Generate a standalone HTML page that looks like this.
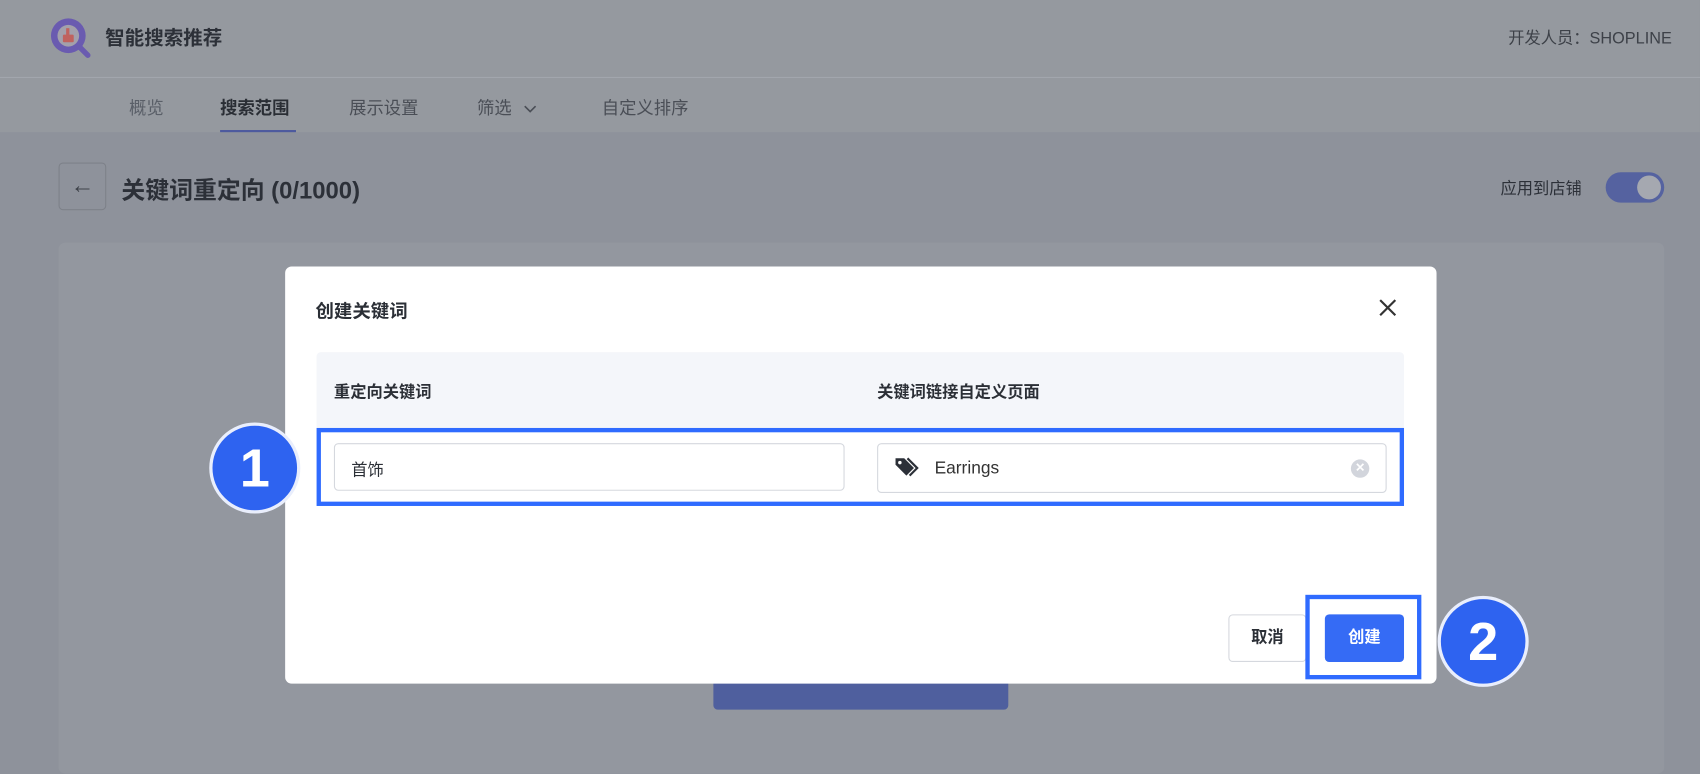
<!DOCTYPE html>
<html><head><meta charset="utf-8"><style>
*{margin:0;padding:0;box-sizing:border-box}
html,body{width:1700px;height:766px;overflow:hidden;background:#8e929b}
#w{position:absolute;left:0;top:0;width:1568px;height:707px;transform:scale(1.08418,1.08345);transform-origin:0 0;font-family:"Liberation Sans","Noto Sans CJK SC",sans-serif;color:#2b2f36}
.a{position:absolute}
</style></head><body><div id="w">
<div class="a" style="left:0;top:0;width:1568px;height:72px;background:#95999f;border-bottom:1px solid #a2a6ad"></div>
<div class="a" style="left:0;top:72px;width:1568px;height:50px;background:#95999f"></div>
<svg class="a" style="left:44px;top:14px" width="42" height="42" viewBox="0 0 42 42"><circle cx="19" cy="19" r="16" fill="#6a5bb0"/><circle cx="19" cy="19" r="10" fill="#a3a0ab"/><path d="M29 29l8 8" stroke="#6a5bb0" stroke-width="5" stroke-linecap="round"/><rect x="14" y="18" width="10" height="7" rx="1" fill="#c0625e"/><rect x="17" y="12" width="3" height="8" fill="#c0625e"/></svg>
<div class="a" style="left:97px;top:21px;font-size:18px;font-weight:bold;color:#2c3038">智能搜索推荐</div>
<div class="a" style="right:26px;top:24px;font-size:15px;color:#3d4148">开发人员：SHOPLINE</div>
<div class="a" style="left:119px;top:86px;font-size:16px;color:#5a5f68">概览</div>
<div class="a" style="left:203px;top:86px;font-size:16px;color:#2a2e35;font-weight:bold">搜索范围</div>
<div class="a" style="left:203px;top:120px;width:70px;height:2px;background:#4d5a9e"></div>
<div class="a" style="left:322px;top:86px;font-size:16px;color:#4a4e56">展示设置</div>
<div class="a" style="left:440px;top:86px;font-size:16px;color:#4a4e56">筛选 <svg width="14" height="10" viewBox="0 0 14 10" style="margin-left:6px"><path d="M2 3l5 5 5-5" stroke="#4a4e56" stroke-width="1.5" fill="none"/></svg></div>
<div class="a" style="left:555px;top:86px;font-size:16px;color:#4a4e56">自定义排序</div>
<div class="a" style="left:54px;top:150px;width:44px;height:44px;border:1px solid #7d8189;border-radius:4px;text-align:center;line-height:40px;font-size:22px;color:#3d4148">←</div>
<div class="a" style="left:112px;top:158px;font-size:22px;font-weight:bold;color:#2c3038">关键词重定向 (0/1000)</div>
<div class="a" style="left:1384px;top:163px;font-size:15px;color:#2c3038">应用到店铺</div>
<div class="a" style="left:1481px;top:159px;width:54px;height:28px;border-radius:14px;background:#5562a0"><div class="a" style="right:3px;top:3px;width:22px;height:22px;border-radius:50%;background:#a5a8b0"></div></div>
<div class="a" style="left:54px;top:224px;width:1481px;height:490px;background:#93979f;border-radius:6px"></div>
<div class="a" style="left:658px;top:615px;width:272px;height:40px;background:#4f5f9e;border-radius:4px"></div>
<div class="a" style="left:263px;top:246px;width:1062px;height:385px;background:#fff;border-radius:6px"></div>
<div class="a" style="left:291px;top:273px;font-size:17px;font-weight:bold">创建关键词</div>
<svg class="a" style="left:1270px;top:274px" width="20" height="20" viewBox="0 0 20 20"><path d="M3 3l14 14M17 3L3 17" stroke="#333" stroke-width="2"/></svg>
<div class="a" style="left:292px;top:325px;width:1003px;height:70px;background:#f4f6fa;border-radius:4px 4px 0 0"></div>
<div class="a" style="left:308px;top:351px;font-size:15px;font-weight:bold">重定向关键词</div>
<div class="a" style="left:809px;top:351px;font-size:15px;font-weight:bold">关键词链接自定义页面</div>
<div class="a" style="left:292px;top:395px;width:1003px;height:72px;border:4px solid #2f6bff"></div>
<div class="a" style="left:308px;top:409px;width:471px;height:44px;border:1px solid #d5d8de;border-radius:4px;font-size:15px;padding:13px 15px">首饰</div>
<div class="a" style="left:809px;top:409px;width:470px;height:46px;border:1px solid #d5d8de;border-radius:4px"></div>
<svg class="a" style="left:824px;top:421px" width="26" height="20" viewBox="0 0 26 20"><path d="M2 2h8l9 9-7 7-10-10z" fill="#2c3038"/><circle cx="6" cy="6" r="1.6" fill="#fff"/><path d="M13 2l9 9-7 7" stroke="#2c3038" stroke-width="2" fill="none"/></svg>
<div class="a" style="left:862px;top:424px;font-size:16px;color:#333">Earrings</div>
<div class="a" style="left:1246px;top:424px;width:17px;height:17px;border-radius:50%;background:#d2d5dc;color:#fff;font-size:11px;text-align:center;line-height:17px;font-weight:bold">✕</div>
<div class="a" style="left:1133px;top:567px;width:72px;height:44px;border:1px solid #d5d8de;border-radius:4px;font-size:15px;text-align:center;line-height:42px;font-weight:bold">取消</div>
<div class="a" style="left:1204px;top:549px;width:107px;height:78px;border:4px solid #2f6bff"></div>
<div class="a" style="left:1222px;top:567px;width:73px;height:44px;background:#356bf5;border-radius:4px;color:#fff;font-size:15px;text-align:center;line-height:44px;font-weight:bold">创建</div>
<div class="a" style="left:193px;top:390px;width:84px;height:84px;border-radius:50%;background:#2e63f0;border:3px solid #e9eefc;color:#fff;font-size:50px;font-weight:bold;text-align:center;line-height:78px">1</div>
<div class="a" style="left:1326px;top:550px;width:84px;height:84px;border-radius:50%;background:#2e63f0;border:3px solid #e9eefc;color:#fff;font-size:50px;font-weight:bold;text-align:center;line-height:78px">2</div>
</div></body></html>
